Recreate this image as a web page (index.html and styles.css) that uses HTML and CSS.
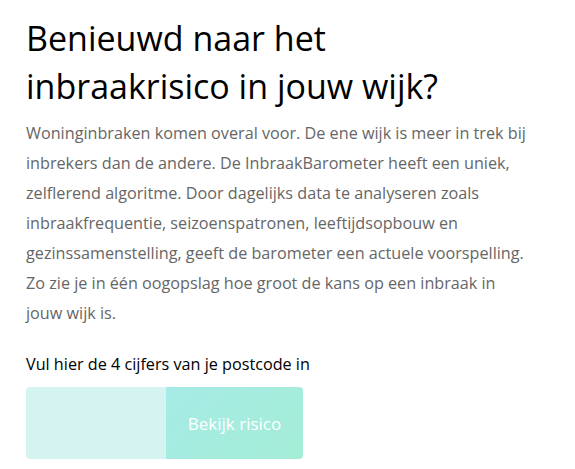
FILE: index.html
```html
<!DOCTYPE html>
<html lang="nl">
<head>
    <meta charset="UTF-8">
    <meta name="viewport" content="width=device-width, initial-scale=1.0">
    <title>InbraakBarometer</title>
    <link rel="stylesheet" href="styles.css">
</head>
<body>
    <div class="intro">
        <h1 class="titel">Benieuwd naar het inbraakrisico in jouw wijk?</h1>

        <p class="tekst">
            Woninginbraken komen overal voor. De ene wijk is meer in trek bij
            inbrekers dan de andere. De InbraakBarometer heeft een uniek,
            zelflerend algoritme. Door dagelijks data te analyseren zoals
            inbraakfrequentie, seizoenspatronen, leeftijdsopbouw en
            gezinssamenstelling, geeft de barometer een actuele voorspelling.<br>
            Zo zie je in één oogopslag hoe groot de kans op een inbraak in<br>
            jouw wijk is.
        </p>

        <label class="label" for="postcode">Vul hier de 4 cijfers van je postcode in</label>

        <!-- Invoerveld met knop ernaast -->
        <form class="zoek">
            <input class="postcode" id="postcode" type="text" maxlength="4">
            <button class="bekijk" type="button">Bekijk risico</button>
        </form>
    </div>
</body>
</html>
```

FILE: styles.css
```css
body {
    margin: 0;
    background-color: #ffffff;
    font-family: "Segoe UI", "Open Sans", "Noto Sans", sans-serif;
}

.intro {
    padding: 14px 20px 0 26px;
}

.titel {
    max-width: 440px;
    font-size: 34px;
    font-weight: 400;
    line-height: 48px;
    color: #000000;
    margin: 0 0 8px 0;
}

.tekst {
    font-size: 16.2px;
    line-height: 30px;
    color: #666666;
    margin: 0 0 25px 0;
}

.label {
    display: block;
    font-size: 16.2px;
    color: #000000;
    margin-bottom: 12px;
}

.zoek {
    display: flex;
    width: 277px;
    height: 72px;
    border-radius: 4px;
    overflow: hidden;
}

.postcode {
    width: 140px;
    box-sizing: border-box;
    border: none;
    background-color: #d5f3f1;
    font-size: 18px;
    padding: 0 12px;
    outline: none;
}

.bekijk {
    flex: 1;
    border: none;
    background: linear-gradient(135deg, #a6ebe6, #a4edd6);
    color: #ffffff;
    font-family: inherit;
    font-size: 17px;
    cursor: pointer;
}
```
